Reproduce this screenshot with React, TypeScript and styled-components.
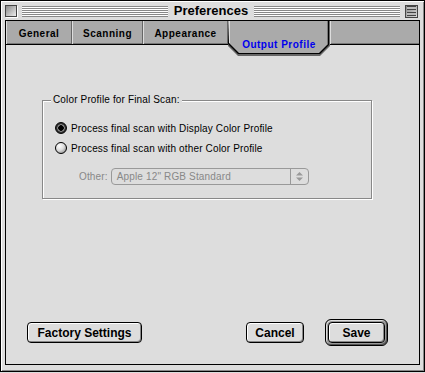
import React from "react";
import styled, { createGlobalStyle } from "styled-components";

const GlobalStyle = createGlobalStyle`
    body {
        margin: 0;
        background: #dddddd;
    }
`;

interface TabProps {
    w: number;
}

const tabs = [
    { label: "General", w: 66 },
    { label: "Scanning", w: 71 },
    { label: "Appearance", w: 85 },
];

const App: React.FC = () => {
    return (
        <Window>
            <GlobalStyle />
            <TitleBar>
                <CloseBox />
                <Stripes />
                <Title>Preferences</Title>
                <Stripes />
                <ZoomBox>
                    <ZoomLine />
                    <ZoomLine />
                </ZoomBox>
            </TitleBar>
            <Body>
                <TabBar>
                    {tabs.map((t) => (
                        <Tab key={t.label} w={t.w}>
                            {t.label}
                        </Tab>
                    ))}
                    <ActiveTab>
                        <TabShape width="102" height="37" viewBox="0 0 102 37">
                            <polygon
                                points="0,0 102,0 102,25 92,35 10,35 0,25"
                                fill="#666666"
                            />
                            <polygon
                                points="0,0 101,0 101,24 92,33 10,33 0,23"
                                fill="#000000"
                            />
                            <polygon
                                points="0,0 100,0 100,23 91,32 11,32 1,22"
                                fill="#aaaaaa"
                            />
                            <line x1="1.5" y1="0" x2="1.5" y2="22" stroke="#dddddd" />
                            <line x1="99.5" y1="0" x2="99.5" y2="23" stroke="#777777" />
                        </TabShape>
                        <ActiveLabel>Output Profile</ActiveLabel>
                    </ActiveTab>
                    <TabRest />
                </TabBar>
                <Content>
                    <GroupBox>
                        <GroupLabel>Color Profile for Final Scan:</GroupLabel>
                        <RadioRow>
                            <Radio checked />
                            <span>Process final scan with Display Color Profile</span>
                        </RadioRow>
                        <RadioRow>
                            <Radio />
                            <span>Process final scan with other Color Profile</span>
                        </RadioRow>
                        <PopupRow>
                            <DimLabel>Other:</DimLabel>
                            <Popup>
                                <PopupText>Apple 12" RGB Standard</PopupText>
                                <PopupArrows>
                                    <svg width="7" height="9" viewBox="0 0 7 9">
                                        <polygon points="3.5,0 7,3.5 0,3.5" fill="#999999" />
                                        <polygon points="0,5.5 7,5.5 3.5,9" fill="#999999" />
                                    </svg>
                                </PopupArrows>
                            </Popup>
                        </PopupRow>
                    </GroupBox>
                    <Spacer />
                    <ButtonRow>
                        <Button w={115}>Factory Settings</Button>
                        <Spacer />
                        <Button w={58}>Cancel</Button>
                        <DefaultRing>
                            <Button w={57}>Save</Button>
                        </DefaultRing>
                    </ButtonRow>
                </Content>
            </Body>
        </Window>
    );
};

const Window = styled.div`
    box-sizing: border-box;
    width: 425px;
    height: 372px;
    border: 1px solid #000000;
    background: #dddddd;
    box-shadow: inset 1px 1px #ffffff, inset -1px -1px #888888;
    display: flex;
    flex-direction: column;
    padding: 0 4px 6px 4px;
    font-family: "Liberation Sans", Arial, sans-serif;
`;

const TitleBar = styled.div`
    height: 19px;
    display: flex;
    align-items: center;
    gap: 5px;
    padding: 0 2px 0 0;
`;

const CloseBox = styled.div`
    box-sizing: border-box;
    width: 12px;
    height: 12px;
    margin-top: 1px;
    border: 1px solid #444444;
    box-shadow: 1px 1px #ffffff;
    background: linear-gradient(135deg, #888888, #eeeeee);
`;

const Stripes = styled.div`
    flex: 1;
    height: 11px;
    margin-top: 1px;
    background: repeating-linear-gradient(
        #888888 0 1px,
        #ffffff 1px 2px
    );
`;

const Title = styled.div`
    font-size: 13px;
    font-weight: bold;
    color: #000000;
    padding: 0 1px;
`;

const ZoomBox = styled.div`
    box-sizing: border-box;
    width: 13px;
    height: 13px;
    margin-top: 1px;
    border: 1px solid #444444;
    background: linear-gradient(135deg, #888888, #dddddd);
    display: flex;
    flex-direction: column;
    justify-content: center;
    gap: 2px;
    padding: 0 1px;
`;

const ZoomLine = styled.div`
    height: 2px;
    border-top: 1px solid #444444;
    border-bottom: 1px solid #444444;
    background: #bbbbbb;
`;

const Body = styled.div`
    flex: 1;
    display: flex;
    flex-direction: column;
    border: 1px solid #000000;
    background: #dddddd;
`;

const TabBar = styled.div`
    box-sizing: border-box;
    height: 24px;
    display: flex;
    align-items: flex-start;
    background: #aaaaaa;
    border-bottom: 1px solid #000000;
    box-shadow: inset 0 -1px #777777;
`;

const Tab = styled.div<TabProps>`
    box-sizing: border-box;
    width: ${(props) => props.w}px;
    height: 23px;
    display: flex;
    align-items: center;
    justify-content: center;
    padding-top: 1px;
    font-size: 10px;
    font-weight: bold;
    letter-spacing: 0.5px;
    color: #000000;
    box-shadow: inset 1px 0 #dddddd, inset -1px 0 #666666, inset 0 -1px #777777;
`;

const ActiveTab = styled.div`
    position: relative;
    z-index: 1;
    width: 102px;
    height: 37px;
    display: flex;
    justify-content: center;
`;

const TabShape = styled.svg`
    position: absolute;
    left: 0;
    top: 0;
`;

const ActiveLabel = styled.span`
    position: relative;
    margin-top: 18px;
    font-size: 10px;
    font-weight: bold;
    letter-spacing: 0.5px;
    color: #0000ee;
`;

const TabRest = styled.div`
    flex: 1;
    height: 23px;
    box-shadow: inset 1px 0 #dddddd, inset 0 -1px #777777;
`;

const Content = styled.div`
    flex: 1;
    display: flex;
    flex-direction: column;
    padding: 55px 31px 18px 21px;
`;

const GroupBox = styled.div`
    position: relative;
    box-sizing: border-box;
    width: 330px;
    height: 99px;
    margin-left: 15px;
    border: 1px solid #888888;
    box-shadow: 1px 1px #ffffff, inset 1px 1px #ffffff;
    padding: 21px 0 0 12px;
    display: flex;
    flex-direction: column;
    gap: 8px;
    font-size: 10px;
    letter-spacing: 0.15px;
    color: #000000;
`;

const GroupLabel = styled.span`
    position: absolute;
    left: 8px;
    top: -7px;
    padding: 0 2px;
    background: #dddddd;
    line-height: 12px;
`;

const RadioRow = styled.div`
    display: flex;
    align-items: center;
    gap: 4px;
    height: 12px;
`;

const Radio = styled.div<{ checked?: boolean }>`
    box-sizing: border-box;
    width: 12px;
    height: 12px;
    border-radius: 50%;
    border: 1px solid #000000;
    background: ${(props) =>
        props.checked
            ? "radial-gradient(circle, #000000 0 2.5px, #888888 3px 3.5px, #333333 4px)"
            : "radial-gradient(circle at 35% 30%, #ffffff 0, #dddddd 45%, #777777 100%)"};
`;

const PopupRow = styled.div`
    display: flex;
    align-items: center;
    gap: 3px;
    margin: 6px 0 0 24px;
`;

const DimLabel = styled.span`
    color: #888888;
`;

const Popup = styled.div`
    box-sizing: border-box;
    width: 198px;
    height: 17px;
    display: flex;
    border: 1px solid #999999;
    border-radius: 4px;
`;

const PopupText = styled.span`
    flex: 1;
    padding-left: 5px;
    line-height: 15px;
    color: #888888;
`;

const PopupArrows = styled.div`
    width: 17px;
    display: flex;
    align-items: center;
    justify-content: center;
    border-left: 1px solid #999999;
`;

const Spacer = styled.div`
    flex: 1;
`;

const ButtonRow = styled.div`
    display: flex;
    align-items: center;
    gap: 21px;
`;

const Button = styled.div<TabProps>`
    box-sizing: border-box;
    width: ${(props) => props.w}px;
    height: 21px;
    display: flex;
    align-items: center;
    justify-content: center;
    border: 1px solid #000000;
    border-radius: 4px;
    background: #dddddd;
    box-shadow: inset 1px 1px #ffffff, inset -1px -1px #888888;
    font-size: 12px;
    font-weight: bold;
    color: #000000;
`;

const DefaultRing = styled.div`
    padding: 2px;
    border: 1px solid #000000;
    border-radius: 6px;
    background: #999999;
    box-shadow: inset 1px 1px #dddddd, inset -1px -1px #555555;
`;

export default App;
